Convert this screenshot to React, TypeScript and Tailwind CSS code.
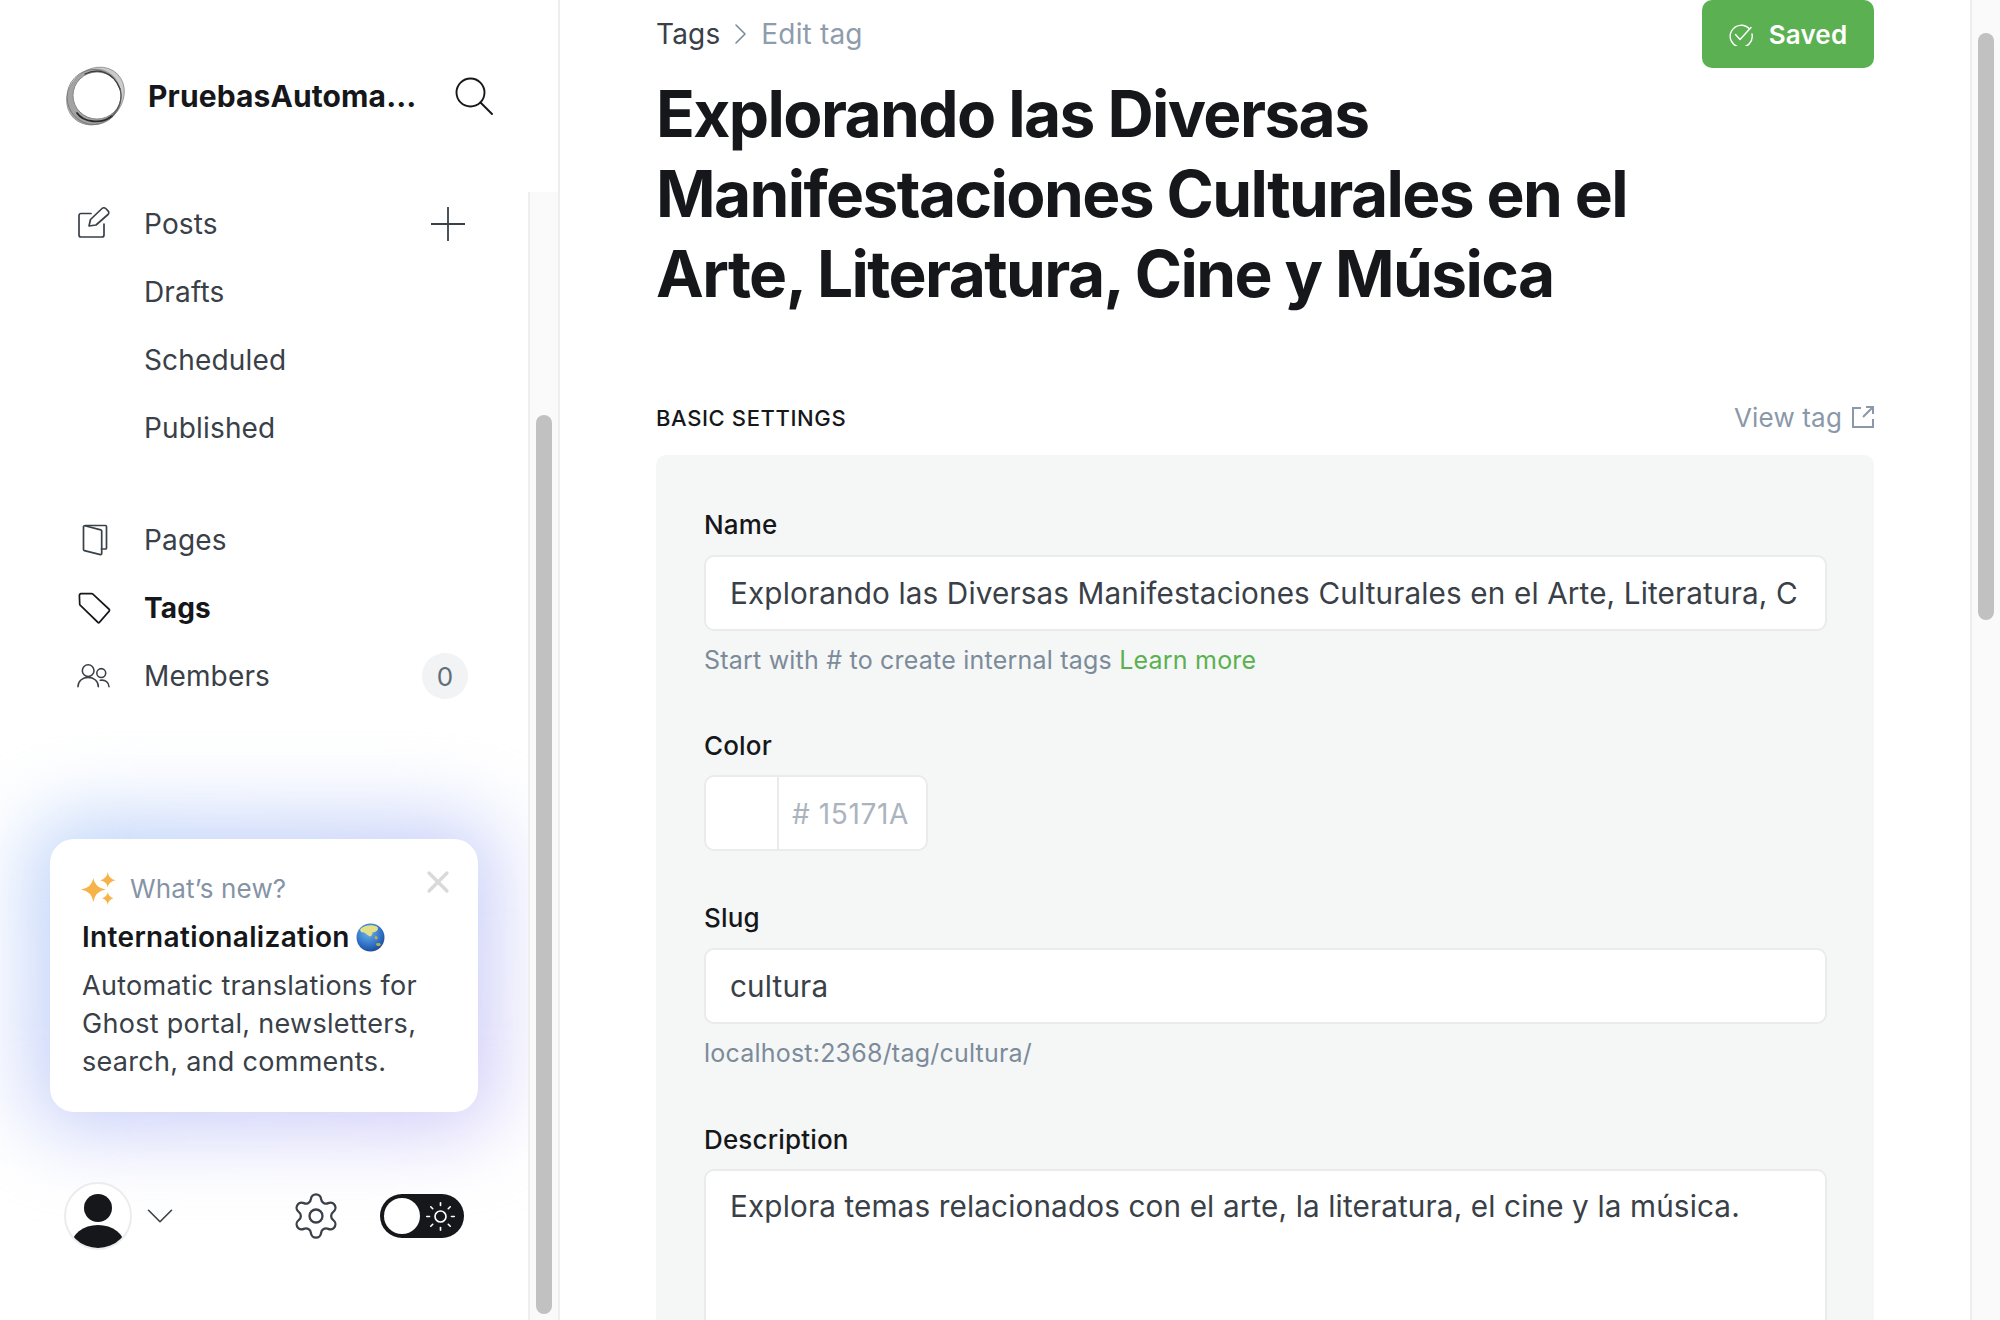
import React from 'react';
import { ChevronDown, Settings, Sun, X } from 'lucide-react';

const PostsIcon = () => (
  <svg viewBox="0 0 32 32" className="h-8 w-8 -translate-y-[2px] text-[#394047]" fill="none" stroke="currentColor" strokeWidth="1.7" strokeLinecap="round" strokeLinejoin="round">
    <path d="M13 7.500H3a2 2 0 0 0-2 2V29a2 2 0 0 0 2 2h21a2 2 0 0 0 2-2V18" />
    <path d="M11 20l1.500-6.500L24 2.500a2.600 2.600 0 0 1 3.700 0l2.300 2.300a2.600 2.600 0 0 1 0 3.700L18 19z" />
  </svg>
);

const PagesIcon = () => (
  <svg viewBox="0 0 26 32" className="ml-[4px] h-8 w-[26px] text-[#394047]" fill="none" stroke="currentColor" strokeWidth="1.7" strokeLinecap="round" strokeLinejoin="round">
    <path d="M3 1.500h20.500a1 1 0 0 1 1 1V24a1 1 0 0 1-1 1h-4" />
    <path d="M1.500 3v22.500a1.200 1.200 0 0 0 .9 1.100l16 4a1 1 0 0 0 1.300-1V7a1.200 1.200 0 0 0-.9-1.100L2.800 1.800a1 1 0 0 0-1.300 1.200z" />
  </svg>
);

const TagIcon = () => (
  <svg viewBox="0 0 34 30" preserveAspectRatio="none" className="-ml-[1px] h-[32px] w-[34px] text-[#15171a]" fill="none" stroke="currentColor" strokeWidth="1.7" strokeLinecap="round" strokeLinejoin="round">
    <path d="M2.400 3.600A1.800 1.800 0 0 1 4 1.600l10.600-.1a2 2 0 0 1 1.300.5l16.200 14.200a1.200 1.200 0 0 1 .1 1.700l-9.600 10.400a1.300 1.300 0 0 1-1.800.1L3.400 12.600a2 2 0 0 1-.7-1.300z" />
  </svg>
);

const MembersIcon = () => (
  <svg viewBox="0 0 34 26" className="-ml-[1px] h-[26px] w-[33px] text-[#394047]" fill="none" stroke="currentColor" strokeWidth="1.6" strokeLinecap="round" strokeLinejoin="round">
    <circle cx="11.500" cy="7.500" r="6" />
    <path d="M1 24c0-5.500 4.500-9.600 10.500-9.600S22 18.500 22 24" />
    <circle cx="25" cy="10" r="4.600" />
    <path d="M24 17.400c5-.8 9 2 9 6.600" />
  </svg>
);

const SearchIcon = () => (
  <svg viewBox="0 0 38 38" className="h-[38px] w-[38px] text-[#15171a]" fill="none" stroke="currentColor" strokeWidth="1.900" strokeLinecap="round">
    <circle cx="15.500" cy="15.500" r="14" />
    <path d="M25.500 25.500L37 37" />
  </svg>
);

const PlusIcon = () => (
  <svg viewBox="0 0 34 34" className="mr-[3px] h-[34px] w-[34px] text-[#394047]" fill="none" stroke="currentColor" strokeWidth="1.800">
    <path d="M17 0v34M0 17h34" />
  </svg>
);

// overlapping translucent rings, the hole is painted white on top
const LogoMark = () => (
  <svg viewBox="0 0 62 62" className="h-[62px] w-[62px]" fill="none">
    <ellipse cx="30.500" cy="31" rx="31" ry="26.500" transform="rotate(-45 30.500 31)" fill="#cccccc" />
    <ellipse cx="29" cy="32" rx="29" ry="26" transform="rotate(-60 29 32)" fill="#a3a3a3" />
    <ellipse cx="30.500" cy="31" rx="31" ry="26.500" transform="rotate(-45 30.500 31)" stroke="#8a8a8a" strokeWidth="0.8" />
    <ellipse cx="29" cy="32" rx="27" ry="27.500" stroke="#6f6f6f" strokeWidth="0.8" />
    <ellipse cx="32" cy="30.500" rx="24" ry="23.500" fill="#ffffff" stroke="#777777" strokeWidth="0.8" />
    <path d="M12 48C18 57 36 60 47 51" stroke="#2b2b2b" strokeWidth="1.800" strokeLinecap="round" />
    <path d="M20 9C32 3 48 6 55 24" stroke="#3a3a3a" strokeWidth="1.300" strokeLinecap="round" />
    <path d="M55 24C58 34 54 44 47 51" stroke="#555555" strokeWidth="1.200" strokeLinecap="round" />
  </svg>
);

const Sparkles = () => (
  <svg viewBox="0 0 34 32" className="-ml-[1px] h-[33px] w-[35px] text-[#f7b24a]" fill="currentColor">
    <path d="M12 6Q13.500 15 24 17Q13.500 19 12 29Q10.500 19 0 17Q10.500 15 12 6z" />
    <path d="M26 0Q26.800 6.500 33.500 8Q26.800 9.500 26 15Q25.200 9.500 18.500 8Q25.200 6.500 26 0z" />
    <path d="M26 19.500Q26.600 24 31.500 25.500Q26.600 27 26 32Q25.400 27 20.500 25.500Q25.400 24 26 19.500z" />
  </svg>
);

const Globe = () => (
  <svg viewBox="0 0 28 28" className="h-[29px] w-[29px]">
    <defs>
      <radialGradient id="sea" cx="0.42" cy="0.32" r="0.8">
        <stop offset="0" stopColor="#6fb4ee" />
        <stop offset="0.6" stopColor="#2d6fc4" />
        <stop offset="1" stopColor="#163a80" />
      </radialGradient>
    </defs>
    <circle cx="14" cy="14" r="13.500" fill="url(#sea)" />
    <path d="M4 6C8 1.500 17 1 21 4c1 3-2 5-5 5 0 3-2 5-4 3-2-1-3-3-6-3-1 0-2-1-2-3z" fill="#e4e08a" />
    <path d="M19 12c2 1 3 3 1 4-2 0-3-2-1-4zM19 20c2-1 5-1 5 1-1 2-4 2-5-1z" fill="#b8a85c" />
  </svg>
);

const AvatarIcon = () => (
  <div className="h-[68px] w-[68px] overflow-hidden rounded-full border-2 border-[#ececec] bg-white">
    <svg viewBox="0 0 64 64" className="h-full w-full" fill="#15171a">
      <circle cx="32" cy="24" r="14" />
      <ellipse cx="32" cy="62" rx="27" ry="21" />
    </svg>
  </div>
);

const ExternalIcon = () => (
  <svg viewBox="0 0 22 22" className="h-[22px] w-[22px]" fill="none" stroke="currentColor" strokeWidth="2">
    <path d="M9 2H1v19h20v-8" />
    <path d="M11 11L21 1M14 1h7v7" />
  </svg>
);

const SavedIcon = () => (
  <svg viewBox="0 0 24 24" className="h-6 w-6" fill="none" stroke="currentColor" strokeWidth="1.400" strokeLinecap="round" strokeLinejoin="round">
    <path d="M20.500 7A11 11 0 1 0 23 12" />
    <path d="M6.500 12.500l4.500 5L22 5.500" />
  </svg>
);

const CrumbChevron = () => (
  <svg viewBox="0 0 13 22" className="mx-[14px] h-[22px] w-[13px] text-[#7c8b9a]" fill="none" stroke="currentColor" strokeWidth="1.600" strokeLinecap="round" strokeLinejoin="round">
    <path d="M2 2l9 9-9 9" />
  </svg>
);

const NavRow = ({
  icon,
  label,
  active,
  right,
}: {
  icon?: React.ReactNode;
  label: string;
  active?: boolean;
  right?: React.ReactNode;
}) => (
  <div className="flex h-[68px] items-center pl-[78px] pr-[60px]">
    <div className="flex w-[66px] items-center">{icon}</div>
    <span className={active ? 'text-[28px] font-bold text-[#15171a]' : 'text-[28px] text-[#394047]'}>{label}</span>
    <div className="ml-auto flex items-center">{right}</div>
  </div>
);

const ScrollTrack = ({ offset, thumb }: { offset: string; thumb: string }) => (
  <div className={`w-[30px] shrink-0 border-l-2 border-[#eeeeee] bg-[#fafafa] pl-[6px] ${offset}`}>
    <div className={`w-[16px] rounded-full bg-[#c1c1c1] ${thumb}`} />
  </div>
);

const Field = ({ label, className, children }: { label: string; className?: string; children: React.ReactNode }) => (
  <div className={className}>
    <label className="block text-[26px] leading-[36px] font-medium text-[#15171a]">{label}</label>
    {children}
  </div>
);

const inputClass =
  'mt-[12px] h-[76px] w-full rounded-[10px] border-2 border-[#e9ebec] bg-white pl-[24px] pr-[26px] text-[29.7px] tracking-[0.0045em] text-[#394047] outline-none';

export default function App() {
  return (
    <div className="flex h-screen w-full overflow-hidden bg-white font-['Inter',sans-serif] tracking-[0.01em]">
      <aside className="flex w-[560px] shrink-0 flex-col border-r-2 border-[#eeeeee]">
        <div className="flex h-[192px] shrink-0 items-center pl-[65px]">
          <LogoMark />
          <span className="ml-[21px] w-[270px] whitespace-nowrap text-[30px] font-bold tracking-[0.004em] text-[#15171a]">
            PruebasAutoma…
          </span>
          <div className="ml-[37px]">
            <SearchIcon />
          </div>
        </div>

        <div className="flex min-h-0 flex-1">
          <div className="relative -mt-[2px] min-w-0 flex-1 overflow-hidden">
            <NavRow icon={<PostsIcon />} label="Posts" right={<PlusIcon />} />
            <NavRow label="Drafts" />
            <NavRow label="Scheduled" />
            <NavRow label="Published" />
            <div className="mt-[44px]">
              <NavRow icon={<PagesIcon />} label="Pages" />
              <NavRow icon={<TagIcon />} label="Tags" active />
              <NavRow
                icon={<MembersIcon />}
                label="Members"
                right={
                  <span className="flex h-[46px] w-[46px] items-center justify-center rounded-full bg-[#f1f3f4] text-[26px] text-[#626d79]">
                    0
                  </span>
                }
              />
            </div>

            {/* whats new card with the glow behind it */}
            <div className="relative ml-[50px] mt-[129px] w-[428px]">
              <div className="absolute -inset-[20px] rounded-[40px] bg-gradient-to-br from-[#bcd5fa] to-[#d4ccf8] blur-[40px]" />
              <div className="relative h-[273px] rounded-[24px] bg-white px-[32px] pt-[31px]">
                <X className="absolute right-[22px] top-[25px] h-[36px] w-[36px] text-[#d9d9d9]" strokeWidth={2.2} />
                <div className="flex h-[36px] items-center text-[26px] text-[#8494a6]">
                  <Sparkles />
                  <span className="ml-[14px]">What’s new?</span>
                </div>
                <div className="mt-[13px] flex h-[36px] items-center text-[28px] font-semibold tracking-[0.012em] text-[#15171a]">
                  Internationalization
                  <span className="ml-[6px]">
                    <Globe />
                  </span>
                </div>
                <p className="mt-[12px] text-[27px] leading-[38px] tracking-[0.0105em] text-[#394047]">
                  Automatic translations for Ghost portal, newsletters, search, and comments.
                </p>
              </div>
            </div>

            <div className="relative mt-[70px] flex items-center pl-[64px] pr-[64px]">
              <AvatarIcon />
              <ChevronDown className="ml-[5px] h-[46px] w-[46px] text-[#394047]" strokeWidth={0.85} />
              <Settings className="ml-auto h-[52px] w-[52px] text-[#394047]" strokeWidth={1.05} />
              <div className="ml-[38px] flex h-[44px] w-[84px] items-center rounded-full bg-[#15171a] px-[4px]">
                <div className="h-[36px] w-[36px] shrink-0 rounded-full bg-white" />
                <Sun className="ml-[4px] h-[33px] w-[33px] shrink-0 text-white" strokeWidth={1.2} />
              </div>
            </div>
          </div>
          <ScrollTrack offset="pt-[223px]" thumb="h-[899px]" />
        </div>
      </aside>

      <main className="min-w-0 flex-1 overflow-hidden pl-[96px] pr-[96px]">
        <header className="flex h-[68px] items-center justify-between">
          <div className="flex items-center text-[28px]">
            <span className="text-[#394047]">Tags</span>
            <CrumbChevron />
            <span className="text-[#8e9cac]">Edit tag</span>
          </div>
          <button className="flex h-[68px] w-[172px] items-center justify-center rounded-[10px] bg-[#5bb151] text-[26px] font-semibold text-white">
            <SavedIcon />
            <span className="ml-[16px]">Saved</span>
          </button>
        </header>

        <h1 className="mt-[6px] max-w-[1060px] text-[64px] leading-[80px] font-bold tracking-[-0.025em] text-[#15171a]">
          Explorando las Diversas Manifestaciones Culturales en el Arte, Literatura, Cine y Música
        </h1>

        <div className="mt-[83px] flex h-[41px] items-center justify-between">
          <h2 className="mt-[1px] text-[22px] font-medium tracking-[0.028em] text-[#15171a]">BASIC SETTINGS</h2>
          <a className="-mt-[1px] flex items-center text-[26px] text-[#8a98a9]">
            View tag
            <span className="ml-[10px]">
              <ExternalIcon />
            </span>
          </a>
        </div>

        <section className="mt-[17px] rounded-t-[10px] bg-[#f5f6f6] pb-[60px] pl-[48px] pr-[47px] pt-[52px]">
          <Field label="Name">
            <input
              className={inputClass}
              readOnly
              value="Explorando las Diversas Manifestaciones Culturales en el Arte, Literatura, Cine y Música"
            />
            <p className="mt-[12px] text-[25px] leading-[34px] tracking-[0.0085em] text-[#7c8b9a]">
              Start with # to create internal tags <span className="text-[#5bb151]">Learn more</span>
            </p>
          </Field>

          <Field label="Color" className="mt-[51px]">
            <div className="mt-[11px] flex h-[76px] w-[224px] overflow-hidden rounded-[10px] border-2 border-[#e9ebec] bg-white">
              <div className="w-[73px] border-r-2 border-[#e9ebec]" />
              <div className="flex flex-1 items-center pl-[13px] pt-[1px] text-[28px] tracking-[0.022em] text-[#abb4be]">
                # 15171A
              </div>
            </div>
          </Field>

          <Field label="Slug" className="mt-[49px]">
            <input className={inputClass} readOnly value="cultura" />
            <p className="mt-[12px] text-[25px] leading-[34px] tracking-[0.0085em] text-[#7c8b9a]">
              localhost:2368/tag/cultura/
            </p>
          </Field>

          <Field label="Description" className="mt-[52px]">
            <textarea
              className="mt-[11px] block h-[300px] w-full resize-none rounded-[10px] border-2 border-[#e9ebec] bg-white px-[24px] pt-[13px] text-[29.7px] tracking-[0.0045em] text-[#394047] outline-none"
              readOnly
              value="Explora temas relacionados con el arte, la literatura, el cine y la música."
            />
          </Field>
        </section>
      </main>

      <ScrollTrack offset="pt-[33px]" thumb="h-[587px]" />
    </div>
  );
}
